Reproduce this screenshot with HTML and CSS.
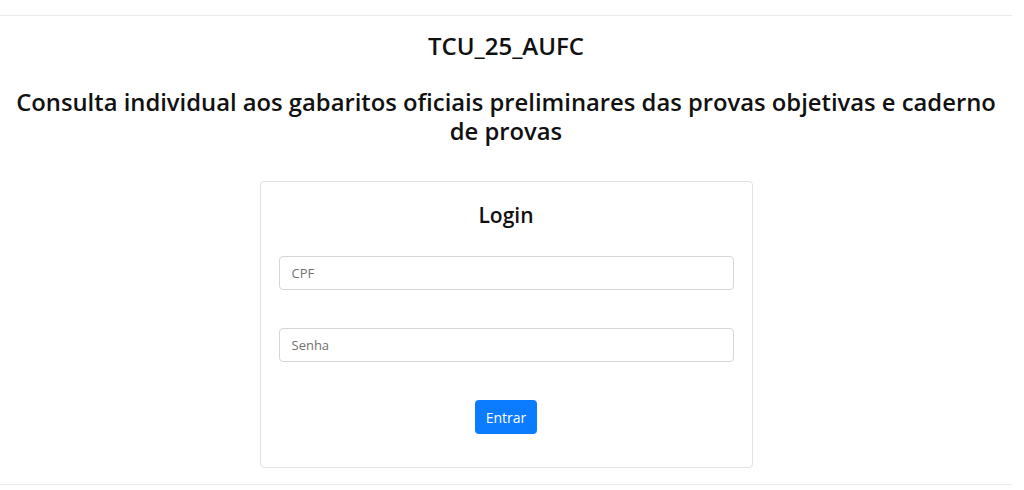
FILE: index.html
```html
<!DOCTYPE html>
<html>
<head>
    <meta charset="utf-8">
    <link rel="stylesheet" href="styles.css">
</head>
<body>
    <div class="wrapper">
        <hr class="divider divider-top">
        <div class="page">
            <h3 class="exam-code">TCU_25_AUFC</h3>
            <h2 class="page-title">Consulta individual aos gabaritos oficiais preliminares das provas objetivas e caderno de provas</h2>

            <div class="login-card">
                <h4 class="login-title">Login</h4>
                <form class="login-form">
                    <input type="text" class="form-input" placeholder="CPF">
                    <input type="password" class="form-input" placeholder="Senha">
                    <button type="button" class="btn-enter">Entrar</button>
                </form>
            </div>
        </div>
        <hr class="divider divider-bottom">
    </div>
</body>
</html>
```

FILE: styles.css
```css
body, html {
margin: 0;
padding: 0;
background-color: #fff;
font-family: "Open Sans", "Noto Sans", sans-serif;
color: #212529;
}

.wrapper {
margin-right: 12px;
}

.divider {
border: none;
border-top: 1px solid #e9e9e9;
margin: 0;
}

.divider-top {
margin-top: 15px;
}

.divider-bottom {
margin-top: 16px;
}

.page {
display: flex;
flex-direction: column;
align-items: center;
padding: 0 10px;
}

.exam-code {
font-size: 24px;
font-weight: 600;
margin: 15px 0 0 0;
line-height: 30px;
color: #111;
}

.page-title {
font-size: 23.8px;
font-weight: 600;
text-align: center;
line-height: 29px;
margin: 27px 0 0 0;
color: #111;
}

.login-card {
width: 493px;
box-sizing: border-box;
margin-top: 35px;
border: 1px solid #e2e2e2;
border-radius: 4px;
padding: 18px 18px 33px 18px;
}

.login-title {
font-size: 21px;
font-weight: 600;
text-align: center;
margin: 0;
line-height: 30px;
color: #111;
}

.login-form {
display: flex;
flex-direction: column;
align-items: center;
margin-top: 26px;
}

.form-input {
width: 100%;
box-sizing: border-box;
height: 34px;
border: 1px solid #d6d6d6;
border-radius: 4px;
padding: 0 12px;
font-family: "Open Sans", sans-serif;
font-size: 13px;
color: #495057;
margin-bottom: 38px;
}

.form-input::placeholder {
color: #707070;
}

.btn-enter {
height: 34px;
padding: 0 11px;
background-color: #0b7cff;
color: #fff;
border: none;
border-radius: 4px;
font-family: "Open Sans", sans-serif;
font-size: 14px;
}
```
